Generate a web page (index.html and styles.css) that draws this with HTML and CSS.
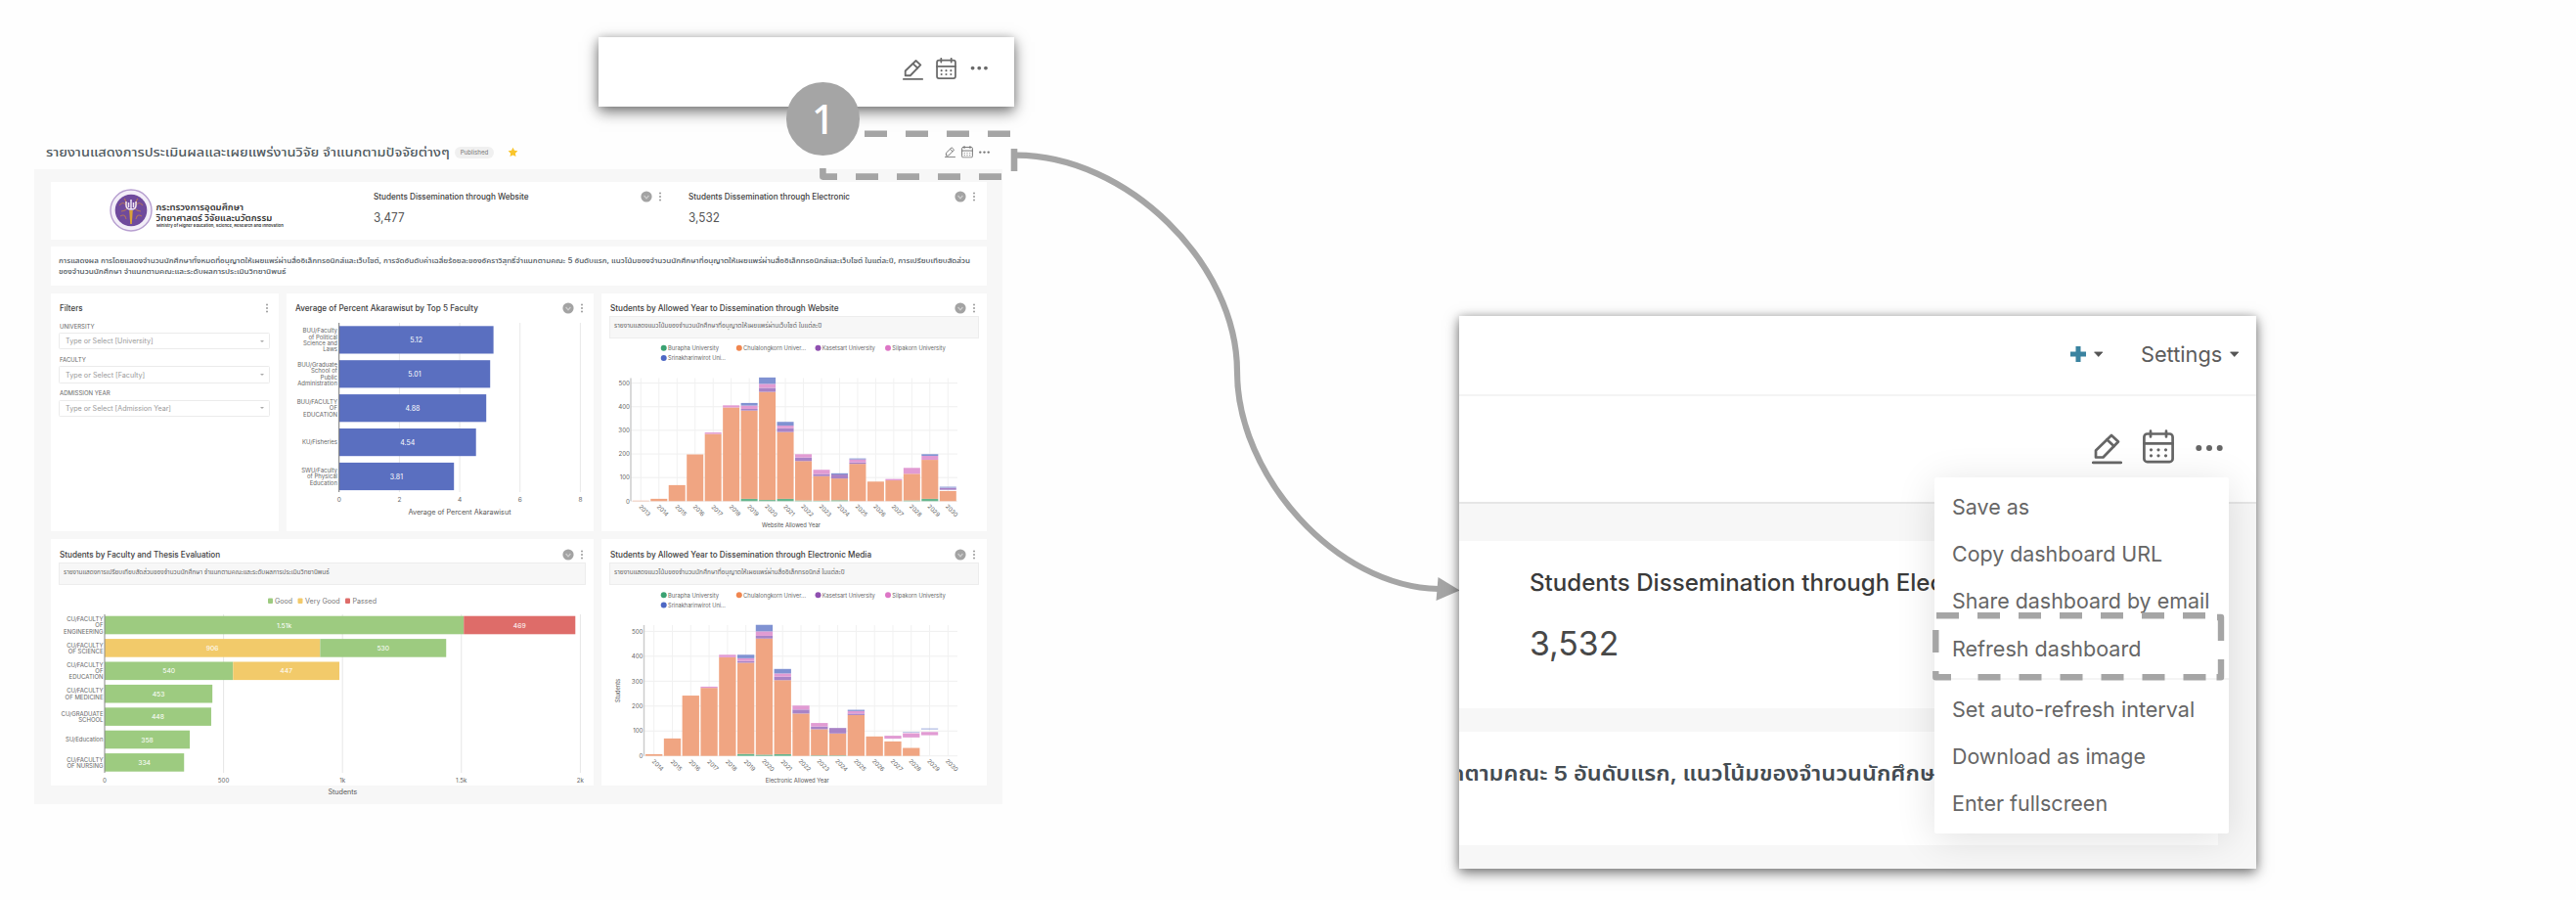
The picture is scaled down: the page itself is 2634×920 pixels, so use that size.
FILE: index.html
```html
<!DOCTYPE html>
<html lang="th">
<head>
<meta charset="utf-8">
<title>Refresh dashboard</title>
<link rel="stylesheet" href="styles.css">
</head>
<body>
<svg class="sprite" width="0" height="0">
  <symbol id="pencil" viewBox="0 0 31 31"><g fill="none" stroke="currentColor" stroke-width="2.7" stroke-linecap="round" stroke-linejoin="round"><path d="M4 24V17L20 1.5L27 8L11.5 24Z"/><path d="M15.5 6L22.5 12.5"/><path d="M1.3 29.3H29.7" stroke-width="2.8"/></g></symbol>
  <symbol id="calendar" viewBox="0 0 32 34"><g fill="none" stroke="currentColor" stroke-width="2.7" stroke-linecap="round"><rect x="1.4" y="4" width="29.2" height="28.6" rx="3.2"/><path d="M1.4 13.8H30.6M8 1.2V7M24 1.2V7"/></g><g fill="currentColor"><circle cx="8.5" cy="20.3" r="1.6"/><circle cx="16" cy="20.3" r="1.6"/><circle cx="23.5" cy="20.3" r="1.6"/><circle cx="8.5" cy="26.3" r="1.6"/><circle cx="16" cy="26.3" r="1.6"/><circle cx="23.5" cy="26.3" r="1.6"/></g></symbol>
  <symbol id="dots" viewBox="0 0 28 8"><g fill="currentColor"><circle cx="3.3" cy="4" r="3"/><circle cx="14" cy="4" r="3"/><circle cx="24.7" cy="4" r="3"/></g></symbol>
  <symbol id="more" viewBox="0 0 4 10"><g fill="#9a9a9a"><circle cx="2" cy="1.4" r="1"/><circle cx="2" cy="5" r="1"/><circle cx="2" cy="8.6" r="1"/></g></symbol>
  <symbol id="cached" viewBox="0 0 12 12"><circle cx="6" cy="6" r="5.6" fill="#a3a3a3"/><path d="M3.6 5L6 7.8L8.4 5" fill="none" stroke="#cfcfcf" stroke-width="1.2"/></symbol>
  <symbol id="caret" viewBox="0 0 10 6"><path d="M.6.8H9.4L5 5.6Z" fill="#555" stroke="#555" stroke-width=".8" stroke-linejoin="round"/></symbol>
</svg>

<main class="canvas">
  <section class="dashboard">
    <header class="dash-head">
      <h1 class="dash-title"><span class="fit" data-w="413">รายงานแสดงการประเมินผลและเผยแพร่งานวิจัย จำแนกตามปัจจัยต่างๆ</span></h1>
      <span class="badge">Published</span>
      <svg class="star" viewBox="0 0 24 24"><path d="M12 1.5l3.2 6.9 7.5.9-5.5 5.2 1.4 7.5L12 18.3 5.4 22l1.4-7.5L1.3 9.300l7.500-.9z" fill="#f9c52c"/></svg>
      <div class="dash-tools">
        <svg class="t-pencil"><use href="#pencil"/></svg>
        <svg class="t-cal"><use href="#calendar"/></svg>
        <svg class="t-dots"><use href="#dots"/></svg>
      </div>
    </header>
    <div class="panel">
      <div class="card stats">
        <div class="brand">
          <svg class="emblem" viewBox="-22 -22 44 44">
            <circle r="21" fill="#f3eef8" stroke="#b79fd0" stroke-width="1.400"/>
            <circle r="16.300" fill="#6f4a9c"/>
            <g fill="none" stroke="#b0735f" stroke-width="1.100"><path d="M-12-5q4-5 7 0t-5 6M12-5q-4-5-7 0t5 6M-11 6q5-3 6 3M11 6q-5-3-6 3M-7-12q3 3 1 6M7-12q-3 3-1 6"/></g>
            <path d="M-1.800 0H1.800L.8 14H-.8Z" fill="#d9a238"/>
            <path d="M-5-9V-5Q-5-1 0-1Q5-1 5-5V-9M0-11V-1M-2.500-8V-3M2.500-8V-3" fill="none" stroke="#efe6f5" stroke-width="1.500"/>
          </svg>
          <div class="brand-text">
            <div class="b1"><span class="fit" data-w="89">กระทรวงการอุดมศึกษา</span></div>
            <div class="b1"><span class="fit" data-w="119">วิทยาศาสตร์ วิจัยและนวัตกรรม</span></div>
            <div class="b2"><span class="fit" data-w="130">Ministry of Higher Education, Science, Research and Innovation</span></div>
          </div>
        </div>
        <div class="stat">
          <div class="head"><h2><span class="fit" data-w="158.500">Students Dissemination through Website</span></h2><svg class="i-cached"><use href="#cached"/></svg><svg class="i-more"><use href="#more"/></svg></div>
          <div class="big"><span class="fit" data-w="32">3,477</span></div>
        </div>
        <div class="stat">
          <div class="head"><h2><span class="fit" data-w="165.500">Students Dissemination through Electronic</span></h2><svg class="i-cached"><use href="#cached"/></svg><svg class="i-more"><use href="#more"/></svg></div>
          <div class="big"><span class="fit" data-w="32">3,532</span></div>
        </div>
      </div>

      <div class="card about">
        <p><span class="fit" data-w="932">การแสดงผล การโดยแสดงจำนวนนักศึกษาทั้งหมดที่อนุญาตให้เผยแพร่ผ่านสื่ออิเล็กทรอนิกส์และเว็บไซต์, การจัดอันดับค่าเฉลี่ยร้อยละของอัคราวิสุทธิ์จำแนกตามคณะ 5 อันดับแรก, แนวโน้มของจำนวนนักศึกษาที่อนุญาตให้เผยแพร่ผ่านสื่ออิเล็กทรอนิกส์และเว็บไซต์ ในแต่ละปี, การเปรียบเทียบสัดส่วน</span></p>
        <p><span class="fit" data-w="233">ของจำนวนนักศึกษา จำแนกตามคณะและระดับผลการประเมินวิทยานิพนธ์</span></p>
      </div>

      <div class="row row-top">
        <div class="card filters">
          <div class="head"><h2><span class="fit" data-w="24">Filters</span></h2><svg class="i-more"><use href="#more"/></svg></div>
          <label><span class="fit" data-w="36">UNIVERSITY</span></label>
          <div class="select"><span class="fit" data-w="90">Type or Select [University]</span><i></i></div>
          <label><span class="fit" data-w="27">FACULTY</span></label>
          <div class="select"><span class="fit" data-w="81">Type or Select [Faculty]</span><i></i></div>
          <label><span class="fit" data-w="52">ADMISSION YEAR</span></label>
          <div class="select"><span class="fit" data-w="108">Type or Select [Admission Year]</span><i></i></div>
        </div>
        <div class="card">
          <div class="head"><h2><span class="fit" data-w="186.500">Average of Percent Akarawisut by Top 5 Faculty</span></h2><svg class="i-cached"><use href="#cached"/></svg><svg class="i-more"><use href="#more"/></svg></div>
          <svg class="chart" id="akarawisut" viewBox="293 324 314 219"></svg>
        </div>
        <div class="card">
          <div class="head"><h2><span class="fit" data-w="233.500">Students by Allowed Year to Dissemination through Website</span></h2><svg class="i-cached"><use href="#cached"/></svg><svg class="i-more"><use href="#more"/></svg></div>
          <div class="note"><span class="fit" data-w="212">รายงานแสดงแนวโน้มของจำนวนนักศึกษาที่อนุญาตให้เผยแพร่ผ่านเว็บไซต์ ในแต่ละปี</span></div>
          <svg class="chart" id="website" viewBox="615 347 394 196"></svg>
        </div>
      </div>

      <div class="row row-bottom">
        <div class="card">
          <div class="head"><h2><span class="fit" data-w="164.500">Students by Faculty and Thesis Evaluation</span></h2><svg class="i-cached"><use href="#cached"/></svg><svg class="i-more"><use href="#more"/></svg></div>
          <div class="note"><span class="fit" data-w="272">รายงานแสดงการเปรียบเทียบสัดส่วนของจำนวนนักศึกษา จำแนกตามคณะและระดับผลการประเมินวิทยานิพนธ์</span></div>
          <svg class="chart" id="thesis" viewBox="52 598 555 205"></svg>
        </div>
        <div class="card">
          <div class="head"><h2><span class="fit" data-w="267">Students by Allowed Year to Dissemination through Electronic Media</span></h2><svg class="i-cached"><use href="#cached"/></svg><svg class="i-more"><use href="#more"/></svg></div>
          <div class="note"><span class="fit" data-w="236">รายงานแสดงแนวโน้มของจำนวนนักศึกษาที่อนุญาตให้เผยแพร่ผ่านสื่ออิเล็กทรอนิกส์ ในแต่ละปี</span></div>
          <svg class="chart" id="electronic" viewBox="615 598 394 205"></svg>
        </div>
      </div>
    </div>
  </section>

  <section class="toolbar-callout">
    <svg class="c-pencil"><use href="#pencil"/></svg>
    <svg class="c-cal"><use href="#calendar"/></svg>
    <svg class="c-dots"><use href="#dots"/></svg>
  </section>

  <svg class="connector" viewBox="0 0 2634 920">
    <g fill="none" stroke="#a5a5a5" stroke-width="6.600">
      <path d="M884 136.800h23M926 136.800h23M968 136.800h23M1010 136.800h23M1037 152v23M1024 180.600h-23M982 180.600h-23M940 180.600h-23M898 180.600h-23M856 180.600H841.400V172" stroke-linejoin="round"/>
      <path d="M1039 158.700C1152 158.700 1265 269 1265 380C1265 486 1366 600 1471 602" stroke-width="6.200"/>
    </g>
    <path d="M1492.700 603.500L1470.500 590L1468.500 614Z" fill="#a5a5a5"/>
  </svg>
  <div class="step">1</div>

  <section class="detail">
    <div class="nav">
      <svg class="plus" viewBox="0 0 18 18"><path d="M9 1V17M1 9H17" stroke="#3a83a0" stroke-width="5"/></svg>
      <svg class="caret"><use href="#caret"/></svg>
      <span class="settings"><span class="fit" data-w="83">Settings</span></span>
      <svg class="caret"><use href="#caret"/></svg>
    </div>
    <div class="tools">
      <svg class="d-pencil"><use href="#pencil"/></svg>
      <svg class="d-cal"><use href="#calendar"/></svg>
      <svg class="d-dots"><use href="#dots"/></svg>
    </div>
    <div class="detail-body">
      <div class="d-card d-stat">
        <h3><span class="fit" data-w="489">Students Dissemination through Electronic</span></h3>
        <div class="d-big"><span class="fit" data-w="91">3,532</span></div>
      </div>
      <div class="d-card d-about"><span class="fit" data-w="495">กตามคณะ 5 อันดับแรก, แนวโน้มของจำนวนนักศึกษ</span></div>
    </div>
    <div class="menu">
      <div class="item"><span class="fit" data-w="79">Save as</span></div>
      <div class="item"><span class="fit" data-w="215">Copy dashboard URL</span></div>
      <div class="item"><span class="fit" data-w="263">Share dashboard by email</span></div>
      <div class="item"><span class="fit" data-w="193">Refresh dashboard</span></div>
      <hr>
      <div class="item"><span class="fit" data-w="248">Set auto-refresh interval</span></div>
      <div class="item"><span class="fit" data-w="198">Download as image</span></div>
      <div class="item"><span class="fit" data-w="159">Enter fullscreen</span></div>
    </div>
    <svg class="mark" viewBox="1970 620 310 85">
      <g fill="none" stroke="#a5a5a5" stroke-width="6.400" stroke-linejoin="round">
        <path d="M1980 629.300h23M2022 629.300h23M2064 629.300h23M2106 629.300h23M2148 629.300h23M2190 629.300h23M2232 629.300h23M2267 631h4v24M2271 674v18.300h-4.500M2255.500 692.300h-23M2213.500 692.300h-23M2171.500 692.300h-23M2129.500 692.300h-23M2087.500 692.300h-23M2045.500 692.300h-23M1995 692.300H1979.300V686M1979.300 667v-23"/>
      </g>
    </svg>
  </section>
</main>
<script src="script.js"></script>
</body>
</html>
```
FILE: styles.css
```css
* { box-sizing: border-box; }
body { margin: 0; background: #fefefe; font-family: Inter, "Noto Sans Thai", "Noto Sans", sans-serif; color: #444; }
h1, h2, h3, p { margin: 0; font-weight: inherit; }
svg { display: block; flex: none; }
.sprite { position: absolute; }
.canvas { position: relative; width: 2634px; height: 920px; overflow: hidden; }
.fit { display: inline-block; white-space: nowrap; transform-origin: 0 50%; }

/* dashboard overview */
.dashboard { position: absolute; left: 35px; top: 138px; width: 990px; height: 684px; display: flex; flex-direction: column; }
.dash-head { height: 35px; display: flex; align-items: center; padding-left: 12px; padding-right: 13px; }
.dash-title { width: 418px; font-size: 12px; line-height: 20px; font-weight: 500; color: #505a60; }
.badge { width: 40px; height: 12px; border-radius: 6px; background: #f0f0f0; font-size: 6.200px; line-height: 12px; text-align: center; color: #777; }
.star { width: 11px; height: 11px; margin-left: 14px; }
.dash-tools { margin-left: auto; display: flex; align-items: center; color: #777; }
.t-pencil { width: 11px; height: 11.500px; }
.t-cal { width: 12px; height: 12.500px; margin-left: 5.500px; }
.t-dots { width: 11px; height: 3.200px; margin-left: 6.500px; }
.panel { flex: 1; background: #f7f7f7; padding: 13px 16.300px 0 17px; display: flex; flex-direction: column; }
.card { background: #fff; overflow: visible; }

.stats { height: 58.700px; display: grid; grid-template-columns: 322px 322px 1fr; }
.brand { display: flex; padding-left: 60px; }
.emblem { width: 44px; height: 44px; margin-top: 7.300px; }
.brand-text { padding: 20px 0 0 3.500px; color: #333; }
.b1 { font-size: 9.500px; line-height: 11px; height: 11px; font-weight: 600; }
.b2 { font-size: 4px; line-height: 6px; height: 6px; font-weight: 600; }
.stat { padding: 7px 0 0 8px; }
.head { height: 16px; display: flex; align-items: center; }
.head h2 { flex: 1; font-size: 8.300px; line-height: 16px; font-weight: 500; color: #3c3c3c; min-width: 0; }
.i-cached { width: 12px; height: 12px; }
.i-more { width: 4px; height: 10px; margin-left: 6px; }
.stat .head { padding-right: 19px; }
.stat:last-child .head { padding-right: 10.500px; }
.stat + .stat { padding-left: 8px; }
.big { font-size: 12.500px; line-height: 20px; margin-top: 3.500px; color: #555; }

.about { height: 40px; margin-top: 7.500px; padding: 9px 8px; }
.about p { font-size: 7px; line-height: 11px; height: 11px; font-weight: 500; color: #4c555c; }

.row { display: grid; column-gap: 8px; }
.row-top { grid-template-columns: 233px 314px 1fr; height: 243.500px; margin-top: 7.800px; }
.row-bottom { grid-template-columns: 555px 1fr; height: 252px; margin-top: 8px; }
.row .card { padding-top: 7.500px; min-width: 0; }
.row .head { padding: 0 10.500px 0 8.500px; }
.row .card .note { margin: 0 8px; height: 23px; background: #f7f7f7; border: 1px solid #ededed; padding-left: 4px; font-size: 6.500px; line-height: 18px; color: #666; }
.chart { overflow: visible; font-family: Inter, "Noto Sans", sans-serif; }
#akarawisut { width: 314px; height: 219px; }
#website { width: 394px; height: 196px; }
#thesis { width: 555px; height: 205px; }
#electronic { width: 394px; height: 205px; }

.filters .head { margin-bottom: .8px; }
.filters label { display: block; height: 16px; padding: 2.500px 0 0 8.500px; font-size: 5.800px; line-height: 13px; color: #666; }
.select { margin: 0 9px 1px 8px; height: 17.200px; border: 1px solid #ebebeb; border-radius: 1.500px; display: flex; align-items: center; justify-content: space-between; padding: 0 5px 0 6px; font-size: 7.200px; color: #999; }
.select i { width: 0; height: 0; border: 2px solid transparent; border-top: 2.500px solid #aaa; border-bottom: 0; }

/* enlarged toolbar */
.toolbar-callout { position: absolute; left: 612px; top: 38px; width: 425px; height: 70.500px; background: #fff; box-shadow: 0 5px 14px rgba(0,0,0,.55), 0 0 8px rgba(0,0,0,.12); display: flex; align-items: center; padding: 0 26.500px 6px 0; justify-content: flex-end; color: #6a6a6a; }
.c-pencil { width: 21px; height: 21px; margin-top: 3px; }
.c-cal { width: 21px; height: 22px; margin-left: 13px; }
.c-dots { width: 18.500px; height: 5px; margin-left: 14px; margin-top: -1px; }

.connector { position: absolute; left: 0; top: 0; width: 2634px; height: 920px; }
.step { position: absolute; left: 804.400px; top: 84px; width: 74.600px; height: 74.600px; border-radius: 50%; background: #a5a5a5; color: #fff; font: 500 41px/74px "Noto Sans", "Open Sans", sans-serif; text-align: center; }

/* enlarged menu */
.detail { position: absolute; left: 1492px; top: 323px; width: 814.500px; height: 564.500px; background: #fff; box-shadow: 0 4px 13px rgba(0,0,0,.55), 0 0 8px rgba(0,0,0,.12); display: flex; flex-direction: column; }
.nav { height: 81.500px; border-bottom: 2px solid #f4f4f4; display: flex; align-items: center; padding: 0 17.500px 1px 0; justify-content: flex-end; }
.plus { width: 18px; height: 18px; margin-top: -1px; }
.caret { width: 9.500px; height: 6px; margin-left: 7px; }
.settings { width: 84px; margin-left: 38.500px; font-size: 22px; color: #5c5c5c; }
.tools { height: 110.500px; border-bottom: 2px solid #e6e6e6; display: flex; justify-content: flex-end; padding: 34px 34px 0 0; color: #666; }
.d-pencil { width: 31px; height: 32px; margin-top: 4px; }
.d-cal { width: 32px; height: 35px; margin-left: 21px; }
.d-dots { width: 28px; height: 8px; margin: 15px 0 0 21.500px; }
.detail-body { flex: 1; background: #f7f7f7; padding: 37.500px 39px 24px 0; display: flex; flex-direction: column; gap: 24px; }
.d-card { background: #fff; }
.d-stat { height: 171px; padding: 24px 0 0 71.500px; }
.d-stat h3 { font-size: 24px; line-height: 38px; font-weight: 500; color: #3a3a3a; }
.d-big { font-size: 34.500px; line-height: 44px; margin-top: 21px; color: #484848; }
.d-about { flex: 1; padding-top: 25px; overflow: hidden; font-size: 20.500px; line-height: 36px; font-weight: 600; color: #444c52; }
.d-about .fit { margin-left: -9px; }
.menu { position: absolute; left: 486px; top: 164.500px; width: 300.500px; height: 364.500px; background: #fff; padding: 6.500px 0; box-shadow: 0 6px 40px rgba(0,0,0,.12); border-radius: 2px; }
.item { height: 48.200px; line-height: 48.200px; padding-left: 17.500px; font-size: 22px; color: #666; }
.menu hr { margin: 6px 0; border: 0; height: 2px; background: #f4f4f4; }
.mark { position: absolute; left: 478px; top: 297px; width: 310px; height: 85px; }
```
FILE: script.js
```js
const NS = "http://www.w3.org/2000/svg";
function add(svg, tag, attrs, text) {
  const el = document.createElementNS(NS, tag);
  for (const k in attrs) el.setAttribute(k, attrs[k]);
  if (text !== undefined) el.textContent = text;
  svg.appendChild(el);
  return el;
}
// Text whose vertical middle sits at y; w squeezes it to a fixed width.
function label(svg, x, y, text, size, fill, anchor, w, extra) {
  const a = { x, y: y + size * 0.36, "font-size": size, fill, "text-anchor": anchor || "middle" };
  if (w) { a.textLength = w; a.lengthAdjust = "spacingAndGlyphs"; }
  return add(svg, "text", Object.assign(a, extra || {}), text);
}
const vline = (s, x, y1, y2, c, w) => add(s, "line", { x1: x, x2: x, y1, y2, stroke: c, "stroke-width": w || 1 });
const rect = (s, x, y, width, height, fill) => add(s, "rect", { x, y, width, height, fill });

// Average of Percent Akarawisut
{
  const s = document.getElementById("akarawisut"), x0 = 346.7, u = 30.84;
  [2, 4, 6, 8].forEach(v => vline(s, x0 + v * u, 331, 504, "#e8e8e8"));
  [0, 2, 4, 6, 8].forEach(v => label(s, x0 + v * u, 512, v, 6.5, "#666"));
  [[5.12, ["BUU/Faculty", "of Political", "Science and", "Laws"]],
   [5.01, ["BUU/Graduate", "School of", "Public", "Administration"]],
   [4.88, ["BUU/FACULTY", "OF", "EDUCATION"]],
   [4.54, ["KU/Fisheries"]],
   [3.81, ["SWU/Faculty", "of Physical", "Education"]]].forEach(([v, lines], i) => {
    const y = 334.3 + i * 34.9;
    rect(s, x0, y, v * u, 28.2, "#5a6fc0");
    label(s, x0 + v * u / 2, y + 14.2, v, 7, "#fff");
    lines.forEach((t, j) => label(s, 345, y + 14.2 + (j - (lines.length - 1) / 2) * 6.3, t, 6, "#666", "end"));
  });
  vline(s, x0, 331, 504, "#777");
  label(s, 470, 524, "Average of Percent Akarawisut", 7.3, "#555", "middle", 105);
}

// Students by Faculty and Thesis Evaluation
{
  const s = document.getElementById("thesis"), x0 = 107, u = 0.2432;
  const G = "#9dcb80", Y = "#f2ca6a", R = "#de6c69";
  [[274, G, "Good", 281, 18], [304.5, Y, "Very Good", 312, 35.5], [353, R, "Passed", 360.5, 24.5]].forEach(([x, c, t, tx, w]) => {
    add(s, "rect", { x, y: 611.6, width: 5, height: 5.4, rx: 1, fill: c });
    label(s, tx, 614.3, t, 7, "#777", "start", w);
  });
  [[0, "0"], [500, "500"], [1000, "1k"], [1500, "1.5k"], [2000, "2k"]].forEach(([v, t]) => {
    if (v) vline(s, x0 + v * u, 628, 790, "#e6e6e6");
    label(s, x0 + v * u, 797.3, t, 6.2, "#666");
  });
  [[["CU/FACULTY", "OF", "ENGINEERING"], [[1510, G, "1.51k"], [469, R, "469"]]],
   [["CU/FACULTY", "OF SCIENCE"], [[906, Y, "906"], [530, G, "530"]]],
   [["CU/FACULTY", "OF", "EDUCATION"], [[540, G, "540"], [447, Y, "447"]]],
   [["CU/FACULTY", "OF MEDICINE"], [[453, G, "453"]]],
   [["CU/GRADUATE", "SCHOOL"], [[448, G, "448"]]],
   [["SU/Education"], [[358, G, "358"]]],
   [["CU/FACULTY", "OF NURSING"], [[334, G, "334"]]]].forEach(([lines, parts], i) => {
    const y = 629.7 + i * 23.4;
    let x = x0;
    parts.forEach(([v, c, t]) => {
      rect(s, x, y, v * u, 18.6, c);
      label(s, x + v * u / 2, y + 9.4, t, 6.8, "#fff");
      x += v * u;
    });
    lines.forEach((t, j) => label(s, 105.5, y + 9.5 + (j - (lines.length - 1) / 2) * 6.2, t, 6, "#666", "end"));
  });
  vline(s, x0, 628, 790, "#888");
  label(s, 350.4, 809.5, "Students", 7.2, "#555", "middle", 30);
}

// Stacked bars per year; each part is [from, to, colour]
function years(id, o) {
  const s = document.getElementById(id);
  const C = { g: "#66b58d", o: "#f0a582", u: "#a883c6", p: "#e19bd3", b: "#8092d2" };
  [[678.7, "#3ba272", "Burapha University", 52, 0], [755.8, "#f0864f", "Chulalongkorn Univer...", 64, 0],
   [836.5, "#8f50b0", "Kasetsart University", 54, 0], [908, "#dd76c6", "Silpakorn University", 54.5, 0],
   [678.7, "#4e68c4", "Srinakharinwirot Uni...", 59, 10.3]].forEach(([x, c, t, w, dy]) => {
    add(s, "circle", { cx: x, cy: o.legend + dy, r: 3, fill: c });
    label(s, x + 4.3, o.legend + dy, t, 6.3, "#666", "start", w);
  });
  for (let v = 0; v <= 500; v += 100) {
    const y = o.y0 - v * o.u;
    add(s, "line", { x1: o.axis, x2: 979, y1: y, y2: y, stroke: "#efefef" });
    label(s, o.axis - 1, y, v, 6.2, "#666", "end");
  }
  o.data.forEach((parts, i) => {
    const x = o.first + i * o.pitch;
    vline(s, x, o.top, o.y0, "#f1f1f1");
    label(s, 0, 0, o.year + i, 6, "#666", "middle", 0, { transform: `translate(${x + 4} ${o.y0 + 9.5}) rotate(45)` });
  });
  o.data.forEach((parts, i) => {
    const x = o.first + i * o.pitch;
    parts.forEach(([a, b, c]) => rect(s, x - o.bw / 2, o.y0 - b * o.u, o.bw, (b - a) * o.u, C[c]));
  });
  vline(s, o.axis, o.top, o.y0, "#ccc", 1.5);
  label(s, o.titleX, o.titleY, o.title, 6.6, "#555", "middle", o.titleW);
  return s;
}
years("website", {
  legend: 356.7, axis: 645, y0: 513.3, u: 0.2413, top: 387.5, first: 655.3, pitch: 18.47, bw: 17, year: 2013,
  title: "Website Allowed Year", titleX: 809, titleY: 537.7, titleW: 60,
  data: [
    [[0, 2, "o"]], [[0, 10, "o"]], [[0, 68, "o"]], [[0, 198, "o"]],
    [[0, 285, "o"], [285, 291, "p"]], [[0, 397, "o"], [397, 406, "p"]],
    [[0, 10, "g"], [10, 384, "o"], [384, 391, "u"], [391, 405, "p"], [405, 416, "b"]],
    [[0, 5, "g"], [5, 463, "o"], [463, 480, "u"], [480, 497, "p"], [497, 524, "b"]],
    [[0, 10, "g"], [10, 293, "o"], [293, 309, "u"], [309, 320, "p"], [320, 336, "b"]],
    [[0, 3, "g"], [3, 170, "o"], [170, 185, "u"], [185, 199, "p"]],
    [[0, 2, "g"], [2, 106, "o"], [106, 115, "u"], [115, 133, "p"]],
    [[0, 4, "g"], [4, 96, "o"], [96, 113, "u"], [113, 118, "b"]],
    [[0, 158, "o"], [158, 164, "u"], [164, 177, "p"], [177, 181, "b"]],
    [[0, 83, "o"]], [[0, 88, "o"], [88, 94, "p"]],
    [[0, 3, "g"], [3, 116, "o"], [116, 141, "p"]],
    [[0, 10, "g"], [10, 175, "o"], [175, 192, "p"], [192, 199, "b"]],
    [[0, 43, "o"], [48, 56, "u"], [57, 61, "b"]]
  ]
});
{
  const s = years("electronic", {
    legend: 608.3, axis: 658.5, y0: 772.7, u: 0.2547, top: 639, first: 668.7, pitch: 18.79, bw: 17.3, year: 2014,
    title: "Electronic Allowed Year", titleX: 815.3, titleY: 797.3, titleW: 65,
    data: [
      [[0, 7, "o"]], [[0, 70, "o"]], [[0, 242, "o"]], [[0, 273, "o"], [273, 278, "p"]],
      [[0, 396, "o"], [396, 406, "p"]],
      [[0, 8, "g"], [8, 374, "o"], [374, 381, "u"], [381, 392, "p"], [392, 406, "b"]],
      [[0, 5, "g"], [5, 471, "o"], [471, 482, "u"], [482, 500, "p"], [500, 526, "b"]],
      [[0, 7, "g"], [7, 304, "o"], [304, 318, "u"], [318, 331, "p"], [331, 349, "b"]],
      [[0, 170, "o"], [170, 186, "u"], [186, 202, "p"]],
      [[0, 2, "g"], [2, 107, "o"], [107, 118, "u"], [118, 132, "p"]],
      [[0, 2, "g"], [2, 90, "o"], [90, 112, "u"]],
      [[0, 164, "o"], [164, 170, "u"], [170, 180, "p"], [180, 185, "b"]],
      [[0, 78, "o"]], [[0, 58, "o"], [69, 81, "p"]],
      [[0, 32, "o"], [74, 91, "p"], [94, 96, "b"]],
      [[83, 96, "p"], [107, 110, "b"]], []
    ]
  });
  label(s, 0, 0, "Students", 6, "#555", "middle", 24, { transform: "translate(631.5 706) rotate(-90)" });
}

// Scale each fitted label horizontally to its target width
document.querySelectorAll(".fit").forEach(el => {
  el.style.transform = `scaleX(${el.dataset.w / el.offsetWidth})`;
});
```
